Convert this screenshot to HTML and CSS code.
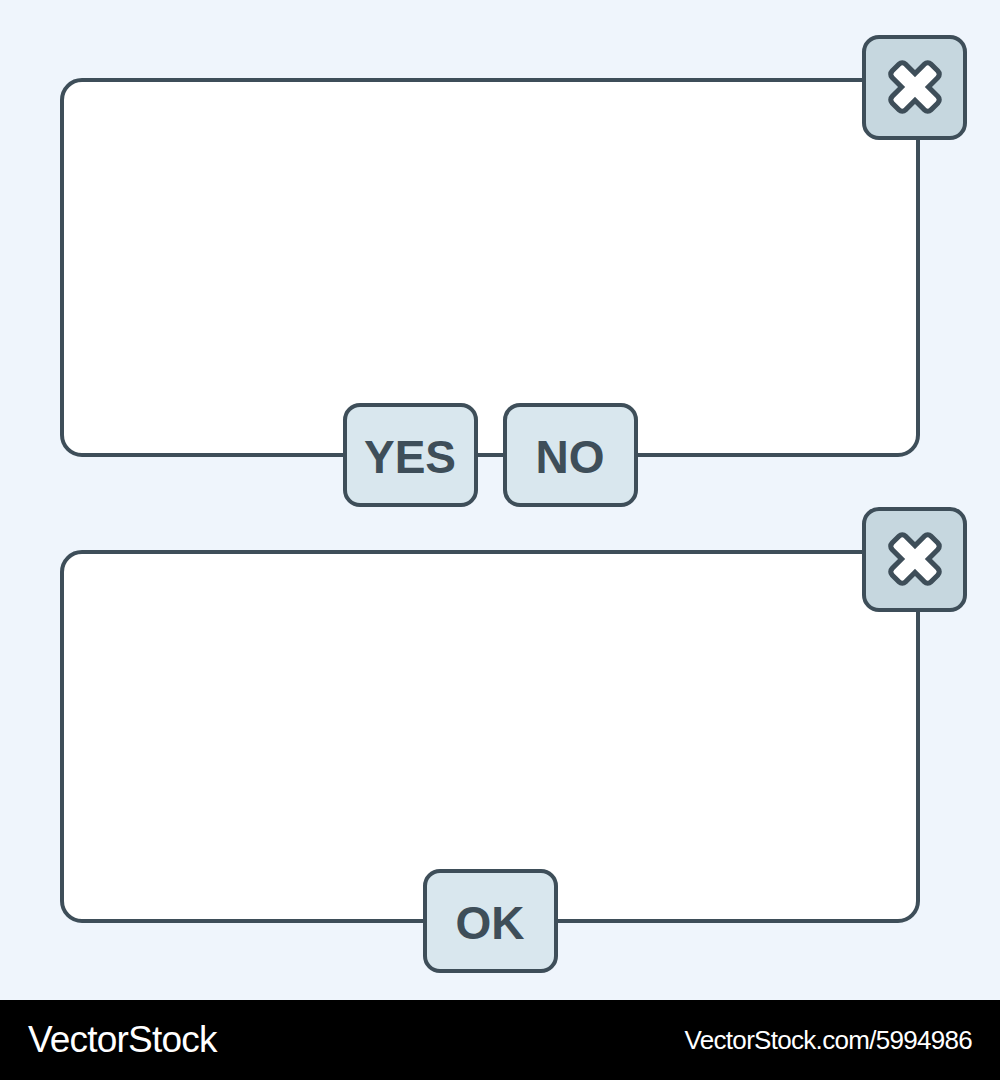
FILE: index.html
```html
<!DOCTYPE html>
<html lang="en">
<head>
  <meta charset="UTF-8" />
  <meta name="viewport" content="width=device-width, initial-scale=1.0"/>
  <title>Dialog boxes</title>
  <link rel="stylesheet" href="styles.css">
</head>
<body>
  <main class="stage">
    <!-- Confirm dialog -->
    <div class="dialog dialog-confirm">
      <button class="close-btn" aria-label="Close">
        <svg viewBox="-32 -32 64 64" width="64" height="64">
          <g transform="rotate(45)">
            <rect class="x-edge" x="-30" y="-12" width="60" height="24" rx="7"/>
            <rect class="x-edge" x="-12" y="-30" width="24" height="60" rx="7"/>
            <rect class="x-fill" x="-25" y="-7" width="50" height="14" rx="2.5"/>
            <rect class="x-fill" x="-7" y="-25" width="14" height="50" rx="2.5"/>
          </g>
        </svg>
      </button>
      <div class="dialog-actions">
        <button class="dialog-btn">YES</button>
        <button class="dialog-btn">NO</button>
      </div>
    </div>

    <!-- Alert dialog -->
    <div class="dialog dialog-alert">
      <button class="close-btn" aria-label="Close">
        <svg viewBox="-32 -32 64 64" width="64" height="64">
          <g transform="rotate(45)">
            <rect class="x-edge" x="-30" y="-12" width="60" height="24" rx="7"/>
            <rect class="x-edge" x="-12" y="-30" width="24" height="60" rx="7"/>
            <rect class="x-fill" x="-25" y="-7" width="50" height="14" rx="2.5"/>
            <rect class="x-fill" x="-7" y="-25" width="14" height="50" rx="2.5"/>
          </g>
        </svg>
      </button>
      <div class="dialog-actions">
        <button class="dialog-btn">OK</button>
      </div>
    </div>
  </main>

  <footer class="footer">
    <span class="footer-brand">VectorStock</span>
    <span class="footer-id">VectorStock.com/5994986</span>
  </footer>
</body>
</html>
```

FILE: styles.css
```css
* {
  margin: 0; padding: 0; box-sizing: border-box; font-family: 'Liberation Sans', Arial, sans-serif;
}

body {
  background: #eff5fc;
  width: 1000px;
}

.stage {
  height: 1000px;
  padding: 78px 80px 0 60px;
  display: flex;
  flex-direction: column;
  gap: 93px;
}

.dialog {
  position: relative;
  width: 860px;
  background: #fff;
  border: 4px solid #3e4e59;
  border-radius: 22px;
}

.dialog-confirm {
  height: 379px;
}

.dialog-alert {
  height: 373px;
}

.close-btn {
  position: absolute;
  top: -47px;
  right: -51px;
  width: 105px;
  height: 105px;
  background: #c6d7df;
  border: 4px solid #3e4e59;
  border-radius: 17px;
  display: flex;
  align-items: center;
  justify-content: center;
  cursor: pointer;
}

.close-btn svg {
  display: block;
  margin-top: -2px;
}

.x-edge {
  fill: #3e4e59;
}

.x-fill {
  fill: #fff;
}

.dialog-actions {
  position: absolute;
  left: 0;
  right: 0;
  bottom: -54px;
  display: flex;
  justify-content: center;
  gap: 25px;
}

.dialog-btn {
  width: 135px;
  height: 104px;
  padding-top: 3px;
  background: #d9e7ee;
  border: 4px solid #3e4e59;
  border-radius: 17px;
  color: #3e4e59;
  font-size: 46px;
  font-weight: bold;
  cursor: pointer;
}

.footer {
  height: 80px;
  background: #000;
  color: #fff;
  display: flex;
  justify-content: space-between;
  align-items: center;
  padding: 0 28px;
}

.footer-brand {
  font-size: 37px;
  letter-spacing: -0.8px;
}

.footer-id {
  font-size: 26px;
  letter-spacing: -0.7px;
}
```
